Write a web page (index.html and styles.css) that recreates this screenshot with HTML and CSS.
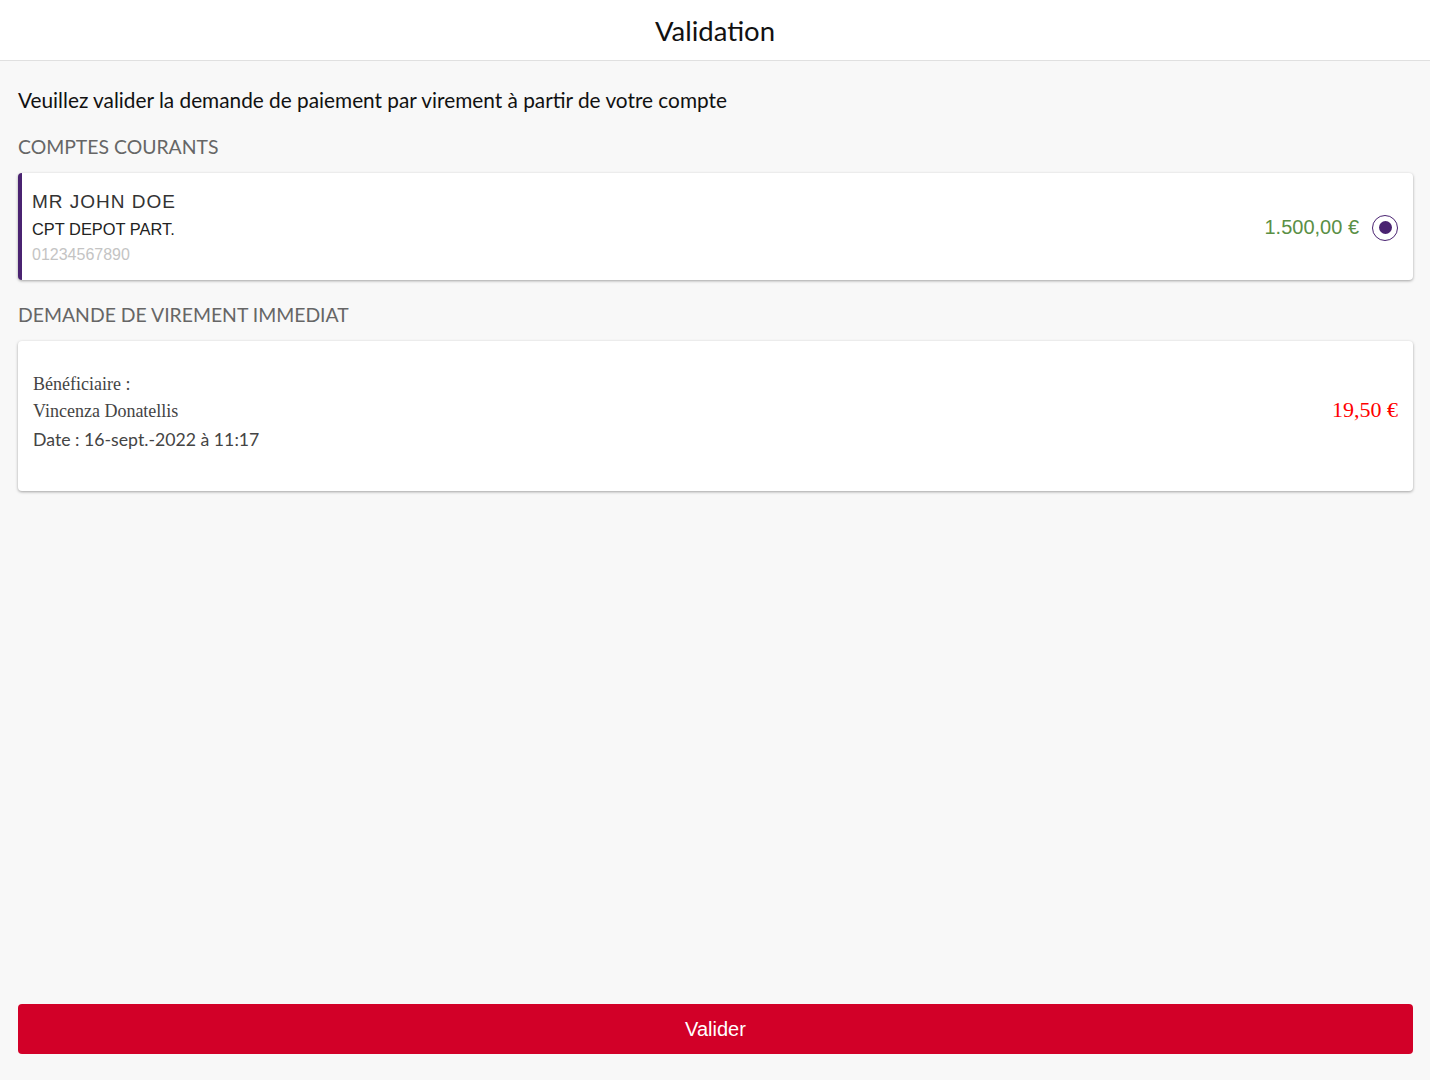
FILE: index.html
```html
<!DOCTYPE html>
<html lang="fr">
<head>
  <meta charset="UTF-8">
  <title>Validation</title>
  <meta name="viewport" content="width=device-width, initial-scale=1">
  <link rel="stylesheet" href="styles.css">
</head>
<body>

<header class="topbar">
  <h1>Validation</h1>
</header>

<main class="content">
  <p class="intro">Veuillez valider la demande de paiement par virement à partir de votre compte</p>

  <h2 class="section-title">COMPTES COURANTS</h2>
  <div class="card account">
    <div class="account-info">
      <div class="holder">MR JOHN DOE</div>
      <div class="acc-type">CPT DEPOT PART.</div>
      <div class="acc-num">01234567890</div>
    </div>
    <div class="account-side">
      <span class="balance">1.500,00 €</span>
      <span class="radio"><span class="dot"></span></span>
    </div>
  </div>

  <h2 class="section-title">DEMANDE DE VIREMENT IMMEDIAT</h2>
  <div class="card transfer">
    <div class="transfer-info">
      <div class="serif">Bénéficiaire :</div>
      <div class="serif">Vincenza Donatellis</div>
      <div class="date">Date : 16-sept.-2022 à 11:17</div>
    </div>
    <div class="amount">19,50 €</div>
  </div>
</main>

<footer class="actions">
  <button class="btn-validate">Valider</button>
</footer>

</body>
</html>
```

FILE: styles.css
```css
* {
  box-sizing: border-box;
}

html, body {
  height: 100%;
}

body {
  margin: 0;
  display: flex;
  flex-direction: column;
  background: #f8f8f8;
  font-family: Lato, "Open Sans", sans-serif;
  color: #111;
}

.topbar {
  height: 61px;
  background: #fff;
  border-bottom: 1px solid #e0e0e0;
  display: flex;
  align-items: center;
  justify-content: center;
}
.topbar h1 {
  margin: 0;
  font-size: 27.5px;
  font-weight: 400;
  color: #111;
}

.content {
  flex: 1;
  padding: 0 17px 0 18px;
}

.intro {
  margin: 26px 0 0;
  font-size: 20.8px;
  line-height: 26px;
}

.section-title {
  margin: 22px 0 14px;
  font-size: 19.4px;
  font-weight: 400;
  color: #666;
  line-height: 24px;
}
.card + .section-title {
  margin-top: 23px;
}

.card {
  background: #fff;
  border-radius: 4px;
  box-shadow: 0 1px 3px rgba(0, 0, 0, 0.35);
  display: flex;
  align-items: center;
  justify-content: space-between;
}

.account {
  height: 107px;
  border-left: 4px solid #4a2371;
  padding: 2px 15px 0 10px;
}
.holder {
  font-family: "Liberation Sans", Arial, sans-serif;
  font-size: 19px;
  letter-spacing: 1px;
  color: #333;
  line-height: 26px;
}
.acc-type {
  font-family: "Liberation Sans", Arial, sans-serif;
  font-size: 16.4px;
  color: #222;
  line-height: 29px;
}
.acc-num {
  font-family: "Liberation Sans", Arial, sans-serif;
  font-size: 16px;
  color: #c4c4c4;
  line-height: 22px;
}
.account-side {
  display: flex;
  align-items: center;
  gap: 13px;
}
.balance {
  font-family: "Liberation Sans", Arial, sans-serif;
  font-size: 20px;
  color: #5a8f45;
}
.radio {
  width: 26px;
  height: 26px;
  border: 1.5px solid #4a2371;
  border-radius: 50%;
  display: flex;
  align-items: center;
  justify-content: center;
}
.radio .dot {
  width: 13px;
  height: 13px;
  border-radius: 50%;
  background: #4a2371;
}

.transfer {
  height: 150px;
  padding: 0 15px 8px 15px;
}
.serif {
  font-family: "Liberation Serif", "Times New Roman", serif;
  font-size: 18px;
  color: #444;
  line-height: 27px;
}
.date {
  font-family: Lato, "Open Sans", sans-serif;
  font-size: 17.7px;
  color: #444;
  line-height: 29px;
}
.amount {
  font-family: "Liberation Serif", "Times New Roman", serif;
  font-size: 22px;
  color: #f00;
  margin-bottom: 4px;
}

.actions {
  padding: 0 17px 26px 18px;
}
.btn-validate {
  width: 100%;
  height: 50px;
  border: none;
  border-radius: 4px;
  background: #d20028;
  color: #fff;
  font-family: "Liberation Sans", Arial, sans-serif;
  font-size: 20px;
  cursor: pointer;
}
```
